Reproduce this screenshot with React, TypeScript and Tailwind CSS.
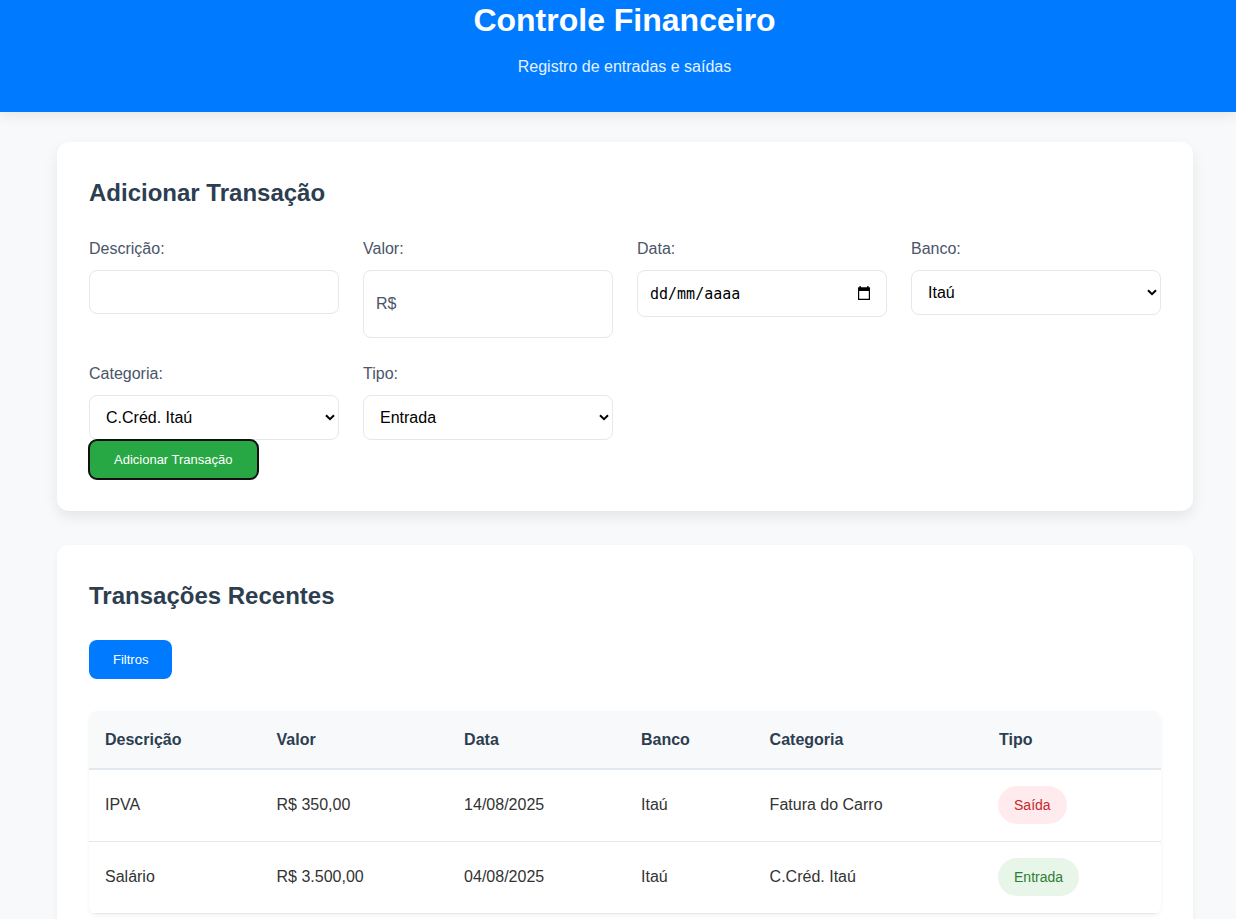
import { useState } from "react";
import type { ReactNode } from "react";

type Kind = "Entrada" | "Saída";

interface Transaction {
  description: string;
  amount: string;
  date: string;
  bank: string;
  category: string;
  kind: Kind;
}

const transactions: Transaction[] = [
  { description: "IPVA", amount: "R$ 350,00", date: "14/08/2025", bank: "Itaú", category: "Fatura do Carro", kind: "Saída" },
  { description: "Salário", amount: "R$ 3.500,00", date: "04/08/2025", bank: "Itaú", category: "C.Créd. Itaú", kind: "Entrada" },
];

const columns = [
  { name: "Descrição", width: "w-[16%]" },
  { name: "Valor", width: "w-[17.5%]" },
  { name: "Data", width: "w-[16.5%]" },
  { name: "Banco", width: "w-[12%]" },
  { name: "Categoria", width: "w-[21.4%]" },
  { name: "Tipo", width: "" },
];

const boxStyle = "w-full rounded-lg border border-[#e2e8f0] bg-white outline-none focus:border-[#007bff]";

function Card({ raised = false, children }: { raised?: boolean; children: ReactNode }) {
  return (
    <section
      className={`rounded-xl bg-white p-8 ${
        raised ? "shadow-[0_6px_14px_rgba(0,0,0,0.08)]" : "shadow-[0_4px_6px_rgba(0,0,0,0.05)]"
      }`}
    >
      {children}
    </section>
  );
}

function Field({ id, label, children }: { id: string; label: string; children: ReactNode }) {
  return (
    <div>
      <label htmlFor={id} className="mb-2 block leading-[26px] text-[#4a5568]">
        {label}
      </label>
      {children}
    </div>
  );
}

function SelectField({ id, label, options }: { id: string; label: string; options: string[] }) {
  return (
    <Field id={id} label={label}>
      <div className="grid items-center">
        <select id={id} className={`${boxStyle} col-start-1 row-start-1 h-[45px] appearance-none pr-8 pl-4 text-black`}>
          {options.map((option) => (
            <option key={option}>{option}</option>
          ))}
        </select>
        <svg
          viewBox="0 0 10 7"
          className="pointer-events-none col-start-1 row-start-1 mr-1 h-[7px] w-[10px] justify-self-end"
          fill="none"
          stroke="#000"
          strokeWidth="2"
          aria-hidden="true"
        >
          <path d="M1 1.2 5 5.2 9 1.2" />
        </svg>
      </div>
    </Field>
  );
}

function CalendarIcon() {
  return (
    <svg viewBox="0 0 14 15" className="h-[15px] w-[14px]" aria-hidden="true">
      <path
        fill="#000"
        fillRule="evenodd"
        d="M2.500 0h1.300v1.300h6.400V0h1.300v1.300H12.500q.5 0 .5.500V13.500q0 .5-.5.500H1.500q-.5 0-.5-.5V1.800q0-.5.5-.5h1zM2.200 5v7.800h9.600V5z"
      />
    </svg>
  );
}

export default function App() {
  const [amount, setAmount] = useState("");

  return (
    <div className="min-h-screen bg-[#f8f9fb] font-['Liberation_Sans',Arial,sans-serif] text-base text-[#333]">
      <header className="bg-[#007bff] pb-[33px] pl-[13px] text-center text-white shadow-[0_4px_12px_rgba(0,0,0,0.08)]">
        <h1 className="text-[32px] leading-10 font-bold">Controle Financeiro</h1>
        <p className="mt-[15px] leading-6 opacity-90">Registro de entradas e saídas</p>
      </header>

      <div className="pl-[14px]">
        <main className="mx-auto flex max-w-[1200px] flex-col gap-[34px] px-8 py-[30px]">
          <Card raised>
            <h2 className="mb-6 text-2xl leading-[38px] font-bold text-[#2c3e50]">Adicionar Transação</h2>
            <form onSubmit={(event) => event.preventDefault()}>
              <div className="grid grid-cols-[repeat(auto-fit,minmax(240px,1fr))] gap-x-6 gap-y-[23px]">
                <Field id="descricao" label="Descrição:">
                  <input id="descricao" type="text" className={`${boxStyle} block h-11 px-4 text-black`} />
                </Field>
                <Field id="valor" label="Valor:">
                  <div className={`${boxStyle} flex h-[68px] items-center px-3`}>
                    <span className="text-[#4a5568]">R$</span>
                    <input
                      id="valor"
                      type="text"
                      inputMode="decimal"
                      value={amount}
                      onChange={(event) => setAmount(event.target.value)}
                      className="h-11 w-full min-w-0 flex-1 px-2 text-black outline-none"
                    />
                  </div>
                </Field>
                <Field id="data" label="Data:">
                  <div className={`${boxStyle} flex h-[47px] items-center pr-[15px] pl-3`}>
                    <input
                      id="data"
                      type="text"
                      placeholder="dd/mm/aaaa"
                      className="w-full min-w-0 flex-1 pt-0.5 font-['DejaVu_Sans_Mono',monospace] text-[15px] text-black outline-none placeholder:text-black"
                    />
                    <button type="button" aria-label="Abrir calendário">
                      <CalendarIcon />
                    </button>
                  </div>
                </Field>
                <SelectField id="banco" label="Banco:" options={["Itaú"]} />
                <SelectField id="categoria" label="Categoria:" options={["C.Créd. Itaú", "Fatura do Carro"]} />
                <SelectField id="tipo" label="Tipo:" options={["Entrada", "Saída"]} />
              </div>
              <button
                type="submit"
                className="block h-[39px] rounded-lg bg-[#28a745] px-[25px] text-[13px] font-medium text-white outline-2 -outline-offset-1 outline-[#101010]"
              >
                Adicionar Transação
              </button>
            </form>
          </Card>

          <Card>
            <h2 className="mb-[25px] text-2xl leading-[38px] font-bold text-[#2c3e50]">Transações Recentes</h2>
            <button type="button" className="block h-[39px] rounded-lg bg-[#007bff] px-6 text-[13px] font-medium text-white">
              Filtros
            </button>
            <div className="mt-8 overflow-hidden rounded-lg shadow-[0_2px_4px_rgba(0,0,0,0.05)]">
              <table className="w-full table-fixed border-collapse text-left">
                <thead>
                  <tr className="border-b-2 border-[#e2e8f0] bg-[#f8f9fb] text-[#2c3e50]">
                    {columns.map((column) => (
                      <th key={column.name} scope="col" className={`${column.width} px-4 py-4 leading-[25px] font-bold`}>
                        {column.name}
                      </th>
                    ))}
                  </tr>
                </thead>
                <tbody>
                  {transactions.map((row) => (
                    <tr key={row.description} className="h-[72px] border-b border-[#e2e8f0]">
                      <td className="px-4">{row.description}</td>
                      <td className="px-4">{row.amount}</td>
                      <td className="px-4">{row.date}</td>
                      <td className="px-4">{row.bank}</td>
                      <td className="px-4">{row.category}</td>
                      <td className="px-[15px]">
                        <span
                          className={`block w-fit rounded-[20px] px-4 py-2 text-sm leading-[22px] ${
                            row.kind === "Saída" ? "bg-[#ffebee] text-[#c62828]" : "bg-[#e8f5e9] text-[#2e7d32]"
                          }`}
                        >
                          {row.kind}
                        </span>
                      </td>
                    </tr>
                  ))}
                </tbody>
              </table>
            </div>
          </Card>
        </main>
      </div>
    </div>
  );
}
